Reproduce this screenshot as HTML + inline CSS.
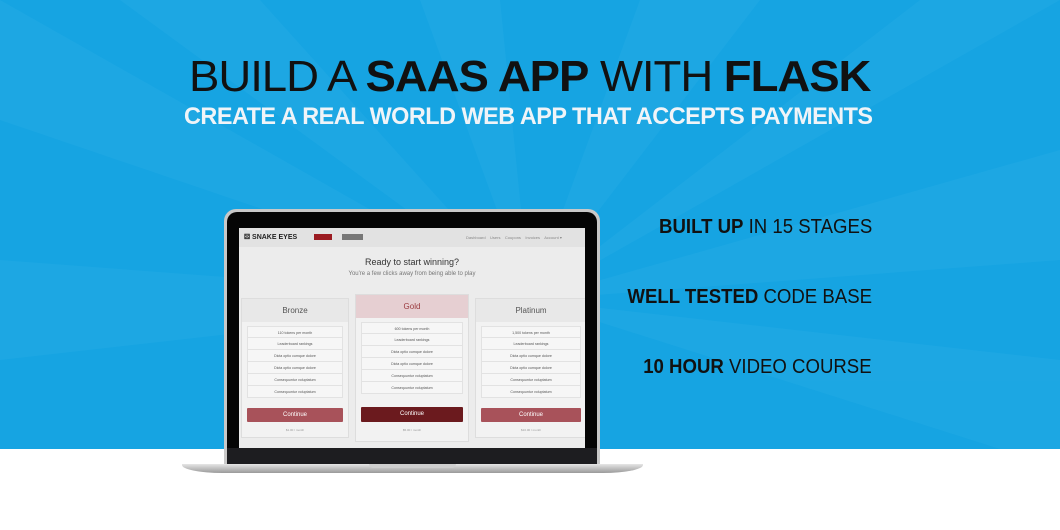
<!DOCTYPE html><html><head><style>
*{margin:0;padding:0;box-sizing:border-box}
body{width:1060px;height:530px;overflow:hidden;position:relative;background:#fff;font-family:"Liberation Sans",sans-serif}
#bg{position:absolute;left:0;top:0;width:1060px;height:449px;background:#16a4e2;overflow:hidden}
.t{position:absolute;white-space:nowrap}
.r{transform:scaleX(0.93);transform-origin:right}
.scr{position:absolute;left:239px;top:228px;width:346px;height:220px;background:#ececec;overflow:hidden}
.nav{position:absolute;left:0;top:0;width:346px;height:19px;background:#e2e2e2;font-size:4px;color:#888}
.card{position:absolute;background:#f2f2f2;border:1px solid #ddd}
.card .h{height:23px;background:#e8e8e8;text-align:center;font-size:8px;line-height:24px;color:#555}
.row{margin:0 5px;height:12px;border:1px solid #e2e2e2;border-top:none;background:#f6f6f6;text-align:center;font-size:3.6px;line-height:12px;color:#555}
.btn{margin:10px 5px 0;height:14px;background:#a8525a;color:#fff;text-align:center;font-size:6px;line-height:14px;border-radius:1px}
.pr{text-align:center;font-size:3px;color:#999;margin-top:6px}
</style></head><body>
<div id="bg">
<svg width="1060" height="449" style="position:absolute;left:0;top:0">
<g fill="#22aae5" opacity="0.6">
<polygon points="530,300 0,0 0,120"/><polygon points="530,300 120,0 260,0"/><polygon points="530,300 420,0 500,0"/>
<polygon points="530,300 640,0 760,0"/><polygon points="530,300 920,0 1060,0"/><polygon points="530,300 1060,150 1060,260"/>
<polygon points="530,300 0,260 0,360"/><polygon points="530,300 1060,360 1060,449 1000,449"/>
</g></svg>
<div class="t" style="left:189px;top:52px;font-size:44px;color:#111;letter-spacing:-1px;transform:scaleX(1.035);transform-origin:left">BUILD A <b>SAAS APP</b> WITH <b>FLASK</b></div>
<div class="t" style="left:184px;top:103px;font-size:24px;color:#f0f4f8;font-weight:bold;letter-spacing:-0.5px;transform:scaleX(0.975);transform-origin:left">CREATE A REAL WORLD WEB APP THAT ACCEPTS PAYMENTS</div>
<div class="t r" style="right:188px;top:216px;font-size:20px;color:#111"><b>BUILT UP</b> IN 15 STAGES</div>
<div class="t r" style="right:188px;top:286px;font-size:20px;color:#111"><b>WELL TESTED</b> CODE BASE</div>
<div class="t r" style="right:188px;top:356px;font-size:20px;color:#111"><b>10 HOUR</b> VIDEO COURSE</div>
</div>
<div style="position:absolute;left:224px;top:209px;width:376px;height:258px;background:#c8c8c8;border-radius:12px 12px 0 0"></div>
<div style="position:absolute;left:227px;top:212px;width:370px;height:254px;background:#050505;border-radius:10px 10px 0 0"></div>
<div style="position:absolute;left:227px;top:448px;width:370px;height:16px;background:#1d1d20"></div>
<div style="position:absolute;left:182px;top:464px;width:461px;height:9px;background:linear-gradient(#e6e6e6,#9a9a9a);border-radius:0 0 40px 40px/0 0 8px 8px"></div>
<div style="position:absolute;left:369px;top:464px;width:87px;height:4px;background:#cfcfcf;border-radius:0 0 4px 4px"></div>
<div class="scr">
<div class="nav"><span style="position:absolute;left:5px;top:5px;font-size:7px;font-weight:bold;color:#222">⚄ SNAKE EYES</span>
<span style="position:absolute;left:75px;top:6px;width:18px;height:6px;background:#9b1c22"></span>
<span style="position:absolute;left:103px;top:6px;width:21px;height:6px;background:#777"></span>
<span style="position:absolute;left:227px;top:7px">Dashboard &nbsp;&nbsp; Users &nbsp;&nbsp; Coupons &nbsp;&nbsp; Invoices &nbsp;&nbsp; Account ▾</span></div>
<div style="position:absolute;left:0;width:346px;top:29px;text-align:center;font-size:9px;color:#333">Ready to start winning?</div>
<div style="position:absolute;left:0;width:346px;top:43px;text-align:center;font-size:6px;color:#777">You're a few clicks away from being able to play</div>
<div class="card" style="left:2px;top:70px;width:108px;height:140px"><div class="h">Bronze</div><div style="height:4px"></div>
<div class="row" style="border-top:1px solid #e2e2e2">110 tokens per month</div><div class="row">Leaderboard rankings</div><div class="row">Dicta optio cumque dolore</div><div class="row">Dicta optio cumque dolore</div><div class="row">Consequuntur voluptatum</div><div class="row">Consequuntur voluptatum</div>
<div class="btn">Continue</div><div class="pr">$1.00 / month</div></div>
<div class="card" style="left:116px;top:66px;width:114px;height:148px"><div class="h" style="background:#e6cfd2;color:#9b3b40">Gold</div><div style="height:4px"></div>
<div class="row" style="border-top:1px solid #e2e2e2">600 tokens per month</div><div class="row">Leaderboard rankings</div><div class="row">Dicta optio cumque dolore</div><div class="row">Dicta optio cumque dolore</div><div class="row">Consequuntur voluptatum</div><div class="row">Consequuntur voluptatum</div>
<div class="btn" style="background:#6b1a1e;margin-top:13px;height:15px">Continue</div><div class="pr">$5.00 / month</div></div>
<div class="card" style="left:236px;top:70px;width:112px;height:140px"><div class="h">Platinum</div><div style="height:4px"></div>
<div class="row" style="border-top:1px solid #e2e2e2">1,500 tokens per month</div><div class="row">Leaderboard rankings</div><div class="row">Dicta optio cumque dolore</div><div class="row">Dicta optio cumque dolore</div><div class="row">Consequuntur voluptatum</div><div class="row">Consequuntur voluptatum</div>
<div class="btn">Continue</div><div class="pr">$10.00 / month</div></div>
</div>
</body></html>
